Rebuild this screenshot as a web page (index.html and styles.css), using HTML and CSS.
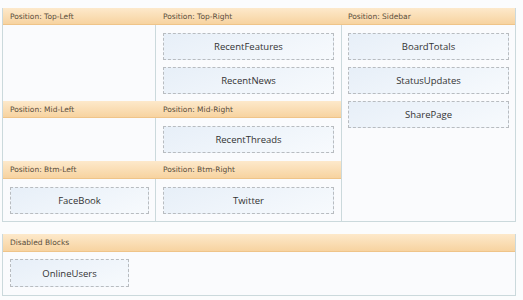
FILE: index.html
```html
<!DOCTYPE html>
<html>
<head>
<meta charset="utf-8">
<link rel="stylesheet" href="styles.css">
</head>
<body>
<div class="layout">
  <div class="hdr h-top">
    <span class="lbl w-left">Position: Top-Left</span>
    <span class="lbl w-mid">Position: Top-Right</span>
  </div>
  <div class="hdr h-side"><span class="lbl">Position: Sidebar</span></div>
  <div class="cell c-tl"></div>
  <div class="cell c-tr">
    <div class="blk">RecentFeatures</div>
    <div class="blk">RecentNews</div>
  </div>
  <div class="cell c-side">
    <div class="blk">BoardTotals</div>
    <div class="blk">StatusUpdates</div>
    <div class="blk">SharePage</div>
  </div>
  <div class="hdr h-mid">
    <span class="lbl w-left">Position: Mid-Left</span>
    <span class="lbl w-mid">Position: Mid-Right</span>
  </div>
  <div class="cell c-ml"></div>
  <div class="cell c-mr">
    <div class="blk">RecentThreads</div>
  </div>
  <div class="hdr h-btm">
    <span class="lbl w-left">Position: Btm-Left</span>
    <span class="lbl w-mid">Position: Btm-Right</span>
  </div>
  <div class="cell c-bl">
    <div class="blk">FaceBook</div>
  </div>
  <div class="cell c-br">
    <div class="blk">Twitter</div>
  </div>
</div>

<div class="disabled">
  <div class="hdr"><span class="lbl">Disabled Blocks</span></div>
  <div class="dis-body">
    <div class="blk blk-dis">OnlineUsers</div>
  </div>
</div>
</body>
</html>
```

FILE: styles.css
```css
html, body {
  margin: 0;
  padding: 0;
  background: #fbfcfd;
}
body {
  padding: 8px 7px 0 2px;
  font-family: "DejaVu Sans", Verdana, sans-serif;
}
.layout {
  display: grid;
  grid-template-columns: 153px 185px 1fr;
  grid-template-rows: 17px 76px 17px 43px 18px 42px;
  border: 1px solid #cbd9dc;
  border-top: none;
  background: #fafbfd;
}
.hdr {
  background: linear-gradient(#fde9cb, #f7d3a0);
  border-bottom: 1px solid #efc489;
  box-sizing: border-box;
  display: flex;
  align-items: center;
  font-size: 7.5px;
  color: #5a4e3c;
}
.lbl {
  padding-left: 7px;
  white-space: nowrap;
}
.w-left { width: 153px; box-sizing: border-box; }
.h-top { grid-column: 1 / 3; grid-row: 1; }
.h-side { grid-column: 3; grid-row: 1; }
.h-mid { grid-column: 1 / 3; grid-row: 3; }
.h-btm { grid-column: 1 / 3; grid-row: 5; }
.c-tl { grid-column: 1; grid-row: 2; }
.c-tr { grid-column: 2; grid-row: 2; }
.c-side { grid-column: 3; grid-row: 2 / 7; border-left: 1px solid #cbd9dc; }
.c-ml { grid-column: 1; grid-row: 4; }
.c-mr { grid-column: 2; grid-row: 4; }
.c-bl { grid-column: 1; grid-row: 6; }
.c-br { grid-column: 2; grid-row: 6; }
.c-tl, .c-ml, .c-bl { border-right: 1px solid #cbd9dc; }
.cell {
  display: flex;
  flex-direction: column;
  gap: 7px;
  padding: 8px 7px 7px 7px;
  box-sizing: border-box;
}
.c-side { padding-left: 6px; padding-right: 6px; }
.c-bl { padding-left: 7px; padding-right: 6px; }
.blk {
  height: 27px;
  box-sizing: border-box;
  border: 1px dashed #b8bcc0;
  background: linear-gradient(160deg, #e7eff8, #f7fafd);
  display: flex;
  align-items: center;
  justify-content: center;
  font-family: "Open Sans", sans-serif;
  font-size: 9.5px;
  color: #333;
}
.disabled {
  margin-top: 12px;
  border: 1px solid #cbd9dc;
  border-top: none;
  background: #fafbfd;
}
.disabled .hdr { height: 18px; }
.dis-body {
  padding: 7px 7px 8px 7px;
  display: flex;
}
.blk-dis { width: 119px; height: 28px; }
```
